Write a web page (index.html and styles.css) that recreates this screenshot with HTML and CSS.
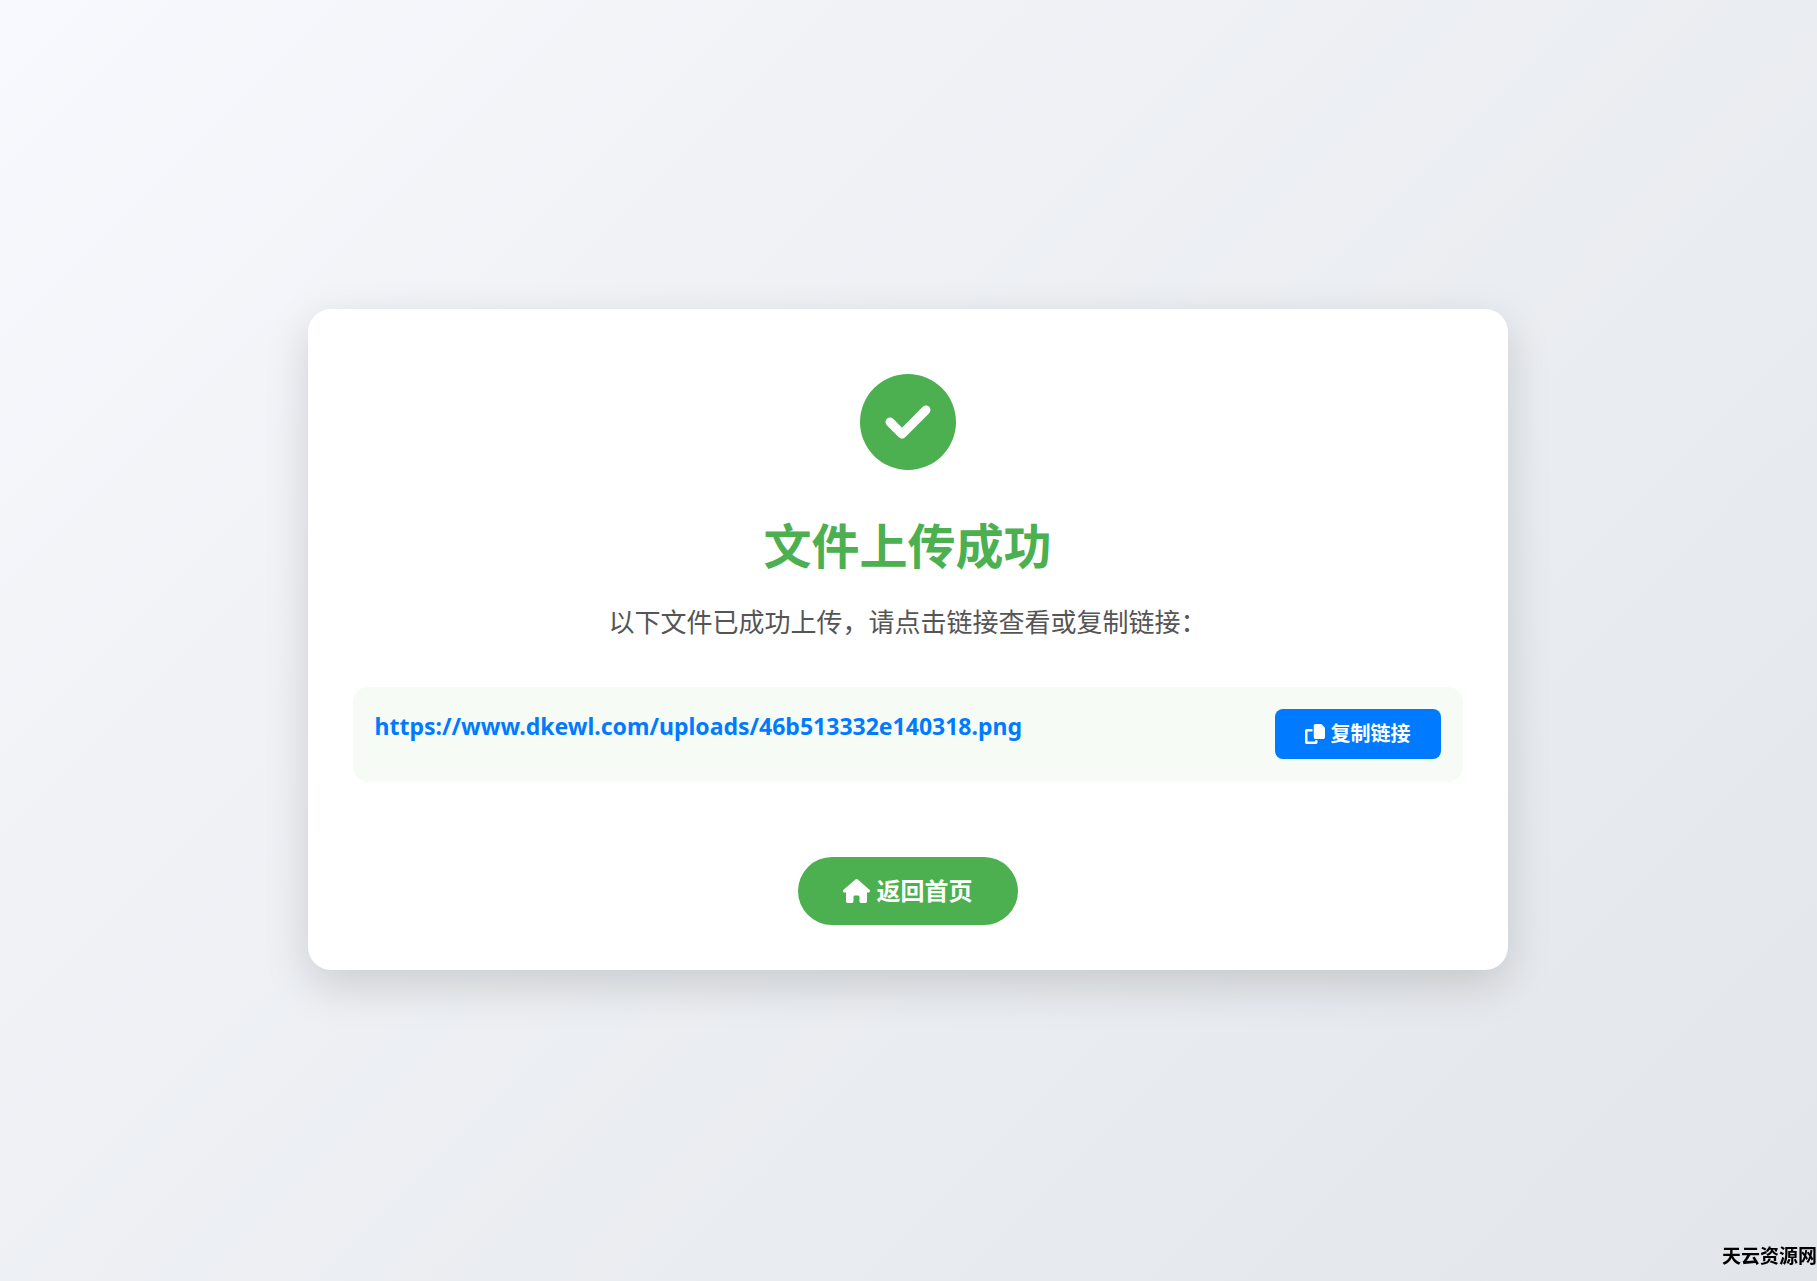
FILE: index.html
```
<!DOCTYPE html>
<html lang="zh-CN">
<head>
<meta charset="utf-8">
<meta name="viewport" content="width=device-width, initial-scale=1">
<title>文件上传成功</title>
<link rel="stylesheet" href="styles.css">
</head>
<body>
<main class="card">
  <svg class="status-icon" viewBox="0 0 512 512" aria-hidden="true"><path d="M256 512A256 256 0 1 0 256 0a256 256 0 1 0 0 512zM369 209L241 337c-9.400 9.400-24.600 9.400-33.900 0l-64-64c-9.400-9.400-9.400-24.600 0-33.900s24.600-9.400 33.900 0l47 47L335 175c9.400-9.400 24.600-9.400 33.900 0s9.400 24.600 0 33.900z"/></svg>
  <h1 class="title">文件上传成功</h1>
  <p class="message">以下文件已成功上传，请点击链接查看或复制链接：</p>
  <div class="file">
    <a class="file-link" href="#">https://www.dkewl.com/uploads/46b513332e140318.png</a>
    <button class="copy-button" type="button">
      <svg class="copy-icon" viewBox="0 0 512 512" aria-hidden="true"><path d="M272 0L396.100 0c12.700 0 24.900 5.100 33.900 14.100l67.900 67.900c9 9 14.100 21.200 14.100 33.900L512 336c0 26.500-21.500 48-48 48l-192 0c-26.500 0-48-21.500-48-48l0-288c0-26.500 21.500-48 48-48zM48 128l144 0 0 64-128 0 0 256 192 0 0-32 64 0 0 48c0 26.500-21.500 48-48 48L48 512c-26.500 0-48-21.500-48-48L0 176c0-26.500 21.500-48 48-48z"/></svg>
      <span>复制链接</span>
    </button>
  </div>
  <a class="home-button" href="#">
    <svg class="home-icon" viewBox="0 0 576 512" aria-hidden="true"><path d="M575.800 255.500c0 18-15 32.100-32 32.100l-32 0 .7 160.200c0 2.700-.2 5.400-.5 8.100l0 16.200c0 22.100-17.900 40-40 40l-16 0c-1.100 0-2.200 0-3.300-.1c-1.400 .1-2.800 .1-4.200 .1L416 512l-24 0c-22.100 0-40-17.900-40-40l0-24 0-64c0-17.700-14.300-32-32-32l-64 0c-17.700 0-32 14.300-32 32l0 64 0 24c0 22.100-17.900 40-40 40l-24 0-31.900 0c-1.500 0-3-.1-4.500-.2c-1.200 .1-2.400 .2-3.600 .2l-16 0c-22.100 0-40-17.900-40-40l0-112c0-.9 0-1.900 .1-2.800l0-69.700-32 0c-18 0-32-14-32-32.100c0-9 3-17 10-24L266.400 8c7-7 15-8 22-8s15 2 21 7L564.800 231.500c8 7 12 15 11 24z"/></svg>
    <span>返回首页</span>
  </a>
</main>
<div class="watermark">天云资源网</div>
</body>
</html>
```
FILE: styles.css
```
* {
  box-sizing: border-box;
}

body {
  margin: 0;
  min-height: 100vh;
  display: flex;
  align-items: center;
  justify-content: center;
  padding: 0 2px 2px 0;
  background: linear-gradient(135deg, #f7f9fe, #f0f2f6 30%, #e2e6ea);
  font-family: "Noto Sans", "Noto Sans CJK SC", sans-serif;
  color: #555;
}

.card {
  display: flex;
  flex-direction: column;
  align-items: center;
  width: 90%;
  max-width: 1200px;
  padding: 65px 45px 45px;
  border-radius: 23px;
  background: #fff;
  box-shadow: 0 15px 45px rgba(0, 0, 0, 0.15);
}

.status-icon {
  width: 96px;
  height: 96px;
  fill: #4caf50;
}

.title {
  margin: 40px 0 0;
  font-size: 48px;
  line-height: 72px;
  font-weight: 700;
  color: #4caf50;
}

.message {
  margin: 20px 0 45px;
  font-size: 26px;
  line-height: 40px;
}

.file {
  display: flex;
  align-items: flex-start;
  justify-content: space-between;
  width: 100%;
  padding: 22px 22px 23px;
  border-radius: 15px;
  background: #f6fbf6;
}

.file-link {
  font-size: 23px;
  line-height: 34px;
  font-weight: 700;
  color: #007bff;
  text-decoration: none;
  overflow-wrap: anywhere;
}

.copy-button {
  display: flex;
  align-items: center;
  gap: 6px;
  flex: none;
  padding: 10px 30px;
  border: 0;
  border-radius: 8px;
  background: #007bff;
  color: #fff;
  font-family: inherit;
  font-size: 20px;
  line-height: 30px;
  font-weight: 700;
}

.copy-icon {
  width: 20px;
  height: 20px;
  fill: currentColor;
}

.home-button {
  display: flex;
  align-items: center;
  gap: 7px;
  margin-top: 75px;
  padding: 16px 45px;
  border-radius: 34px;
  background: #4caf50;
  color: #fff;
  font-size: 24px;
  line-height: 36px;
  font-weight: 700;
  text-decoration: none;
}

.home-icon {
  width: 27px;
  height: 24px;
  fill: currentColor;
}

.watermark {
  position: fixed;
  right: 0;
  bottom: 10px;
  font-size: 19px;
  line-height: 30px;
  font-weight: 700;
  color: #000;
}
```
